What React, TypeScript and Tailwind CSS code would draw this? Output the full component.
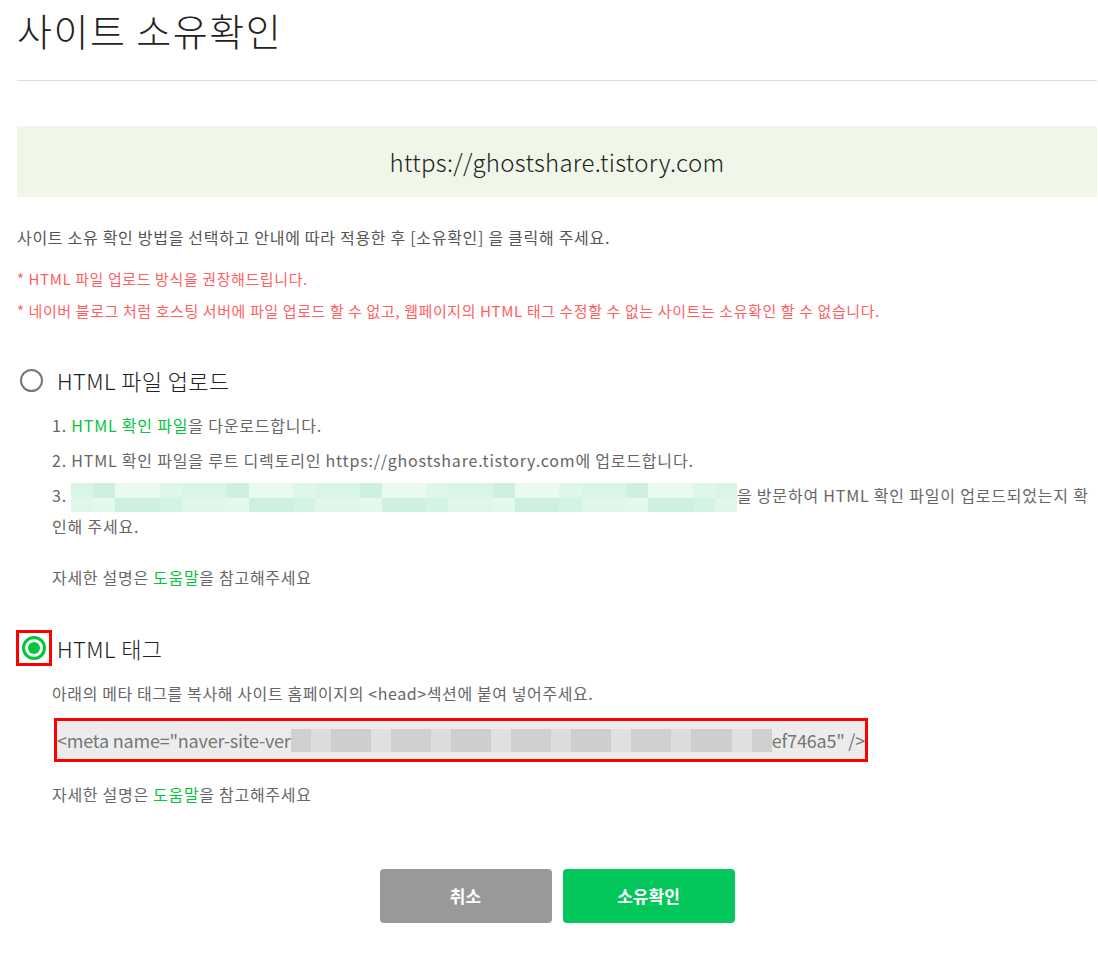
const FONT = { fontFamily: '"Noto Sans CJK KR", "Noto Sans", sans-serif' };

const MINT = ["#d9f5e6", "#e3f8ec", "#cdf1de", "#eafaf1", "#d4f4e3", "#def7ea"];
const GRAY = ["#d0d0d0", "#d7d7d7", "#dcdcdc", "#cecece", "#d4d4d4", "#e0e0e0"];

function Pixelate({
  cols,
  rows,
  palette,
  className,
}: {
  cols: number;
  rows: number;
  palette: string[];
  className: string;
}) {
  const cells = [];
  for (let r = 0; r < rows; r++) {
    for (let c = 0; c < cols; c++) {
      const idx = (c * 7 + r * 5 + ((c * c) % 3)) % palette.length;
      cells.push(<div key={`${r}-${c}`} style={{ backgroundColor: palette[idx] }} />);
    }
  }
  return (
    <span
      className={`inline-grid align-middle ${className}`}
      style={{ gridTemplateColumns: `repeat(${cols}, 1fr)`, gridTemplateRows: `repeat(${rows}, 1fr)` }}
    >
      {cells}
    </span>
  );
}

function HelpLine({ className }: { className: string }) {
  return (
    <p className={`ml-[35px] text-[16px] leading-[29px] tracking-[0.7px] text-[#666] ${className}`}>
      자세한 설명은 <span className="text-[#00c73c]">도움말</span>을 참고해주세요
    </p>
  );
}

export default function App() {
  return (
    <div className="min-h-[959px] w-[1098px] bg-white pl-[17px] pr-[1px]" style={FONT}>
      <h1 className="h-[60px] text-[38px] font-light leading-[60px] tracking-[1.5px] text-[#222]">사이트 소유확인</h1>
      <div className="mt-[20px] border-t border-[#dddddd]" />

      <div className="mt-[45px] flex h-[71px] items-center justify-center bg-[#f0f7e9] text-[24px] font-light tracking-[0.3px] text-[#222]">
        https://ghostshare.tistory.com
      </div>

      <p className="mt-[28px] text-[16px] leading-[24px] tracking-[0.7px] text-[#555]">
        사이트 소유 확인 방법을 선택하고 안내에 따라 적용한 후 [소유확인] 을 클릭해 주세요.
      </p>
      <p className="mt-[18px] text-[15px] leading-[24px] tracking-[0.6px] text-[#ff5f5f]">* HTML 파일 업로드 방식을 권장해드립니다.</p>
      <p className="mt-[8px] text-[15px] leading-[24px] tracking-[0.6px] text-[#ff5f5f]">
        * 네이버 블로그 처럼 호스팅 서버에 파일 업로드 할 수 없고, 웹페이지의 HTML 태그 수정할 수 없는 사이트는 소유확인 할 수 없습니다.
      </p>

      <div className="mt-[39px] flex h-[36px] items-center">
        <div className="ml-[3px] flex w-[37px] items-center">
          <span className="h-[23px] w-[23px] rounded-full border-2 border-[#777]" />
        </div>
        <span className="text-[22px] font-light tracking-[0.4px] text-[#222]">HTML 파일 업로드</span>
      </div>

      <ol className="mt-[13px] ml-[35px] flex flex-col gap-[6px] text-[16px] leading-[29px] tracking-[0.8px] text-[#666]">
        <li>
          1. <span className="text-[#00c73c]">HTML 확인 파일</span>을 다운로드합니다.
        </li>
        <li>2. HTML 확인 파일을 루트 디렉토리인 https://ghostshare.tistory.com에 업로드합니다.</li>
        <li>
          3.<Pixelate cols={30} rows={2} palette={MINT} className="ml-[4px] h-[29px] w-[666px]" />을 방문하여 HTML 확인 파일이 업로드되었는지 확인해 주세요.
        </li>
      </ol>

      <HelpLine className="mt-[22px]" />

      <div className="mt-[38px] flex h-[36px] items-center">
        <div className="-ml-[1px] flex h-[36px] w-[36px] items-center justify-center border-[3px] border-[#ff0000]">
          <span className="flex h-[24px] w-[24px] items-center justify-center rounded-full border-[3px] border-[#00c73c]">
            <span className="h-[12px] w-[12px] rounded-full bg-[#00c73c]" />
          </span>
        </div>
        <span className="ml-[5px] text-[22px] font-light tracking-[0.4px] text-[#222]">HTML 태그</span>
      </div>

      <p className="mt-[15px] ml-[35px] text-[16px] leading-[24px] tracking-[0.6px] text-[#666]">
        아래의 메타 태그를 복사해 사이트 홈페이지의 &lt;head&gt;섹션에 붙여 넣어주세요.
      </p>

      <div className="mt-[13px] ml-[37px] w-[814px] border-[3px] border-[#ff0000]">
        <div className="flex h-[38px] items-center bg-[#ececec] text-[18px] tracking-[-0.2px] text-[#777] whitespace-nowrap">
          &lt;meta name="naver-site-ver
          <Pixelate cols={24} rows={1} palette={GRAY} className="h-[23px] w-[488px]" />
          ef746a5" /&gt;
        </div>
      </div>

      <HelpLine className="mt-[18px]" />

      <div className="mt-[60px] flex justify-center gap-[11px] pb-[35px]">
        <button className="h-[54px] w-[172px] rounded-[4px] bg-[#999999] text-[17px] font-bold text-white">취소</button>
        <button className="h-[54px] w-[172px] rounded-[4px] bg-[#03c75a] text-[17px] font-bold text-white">소유확인</button>
      </div>
    </div>
  );
}
